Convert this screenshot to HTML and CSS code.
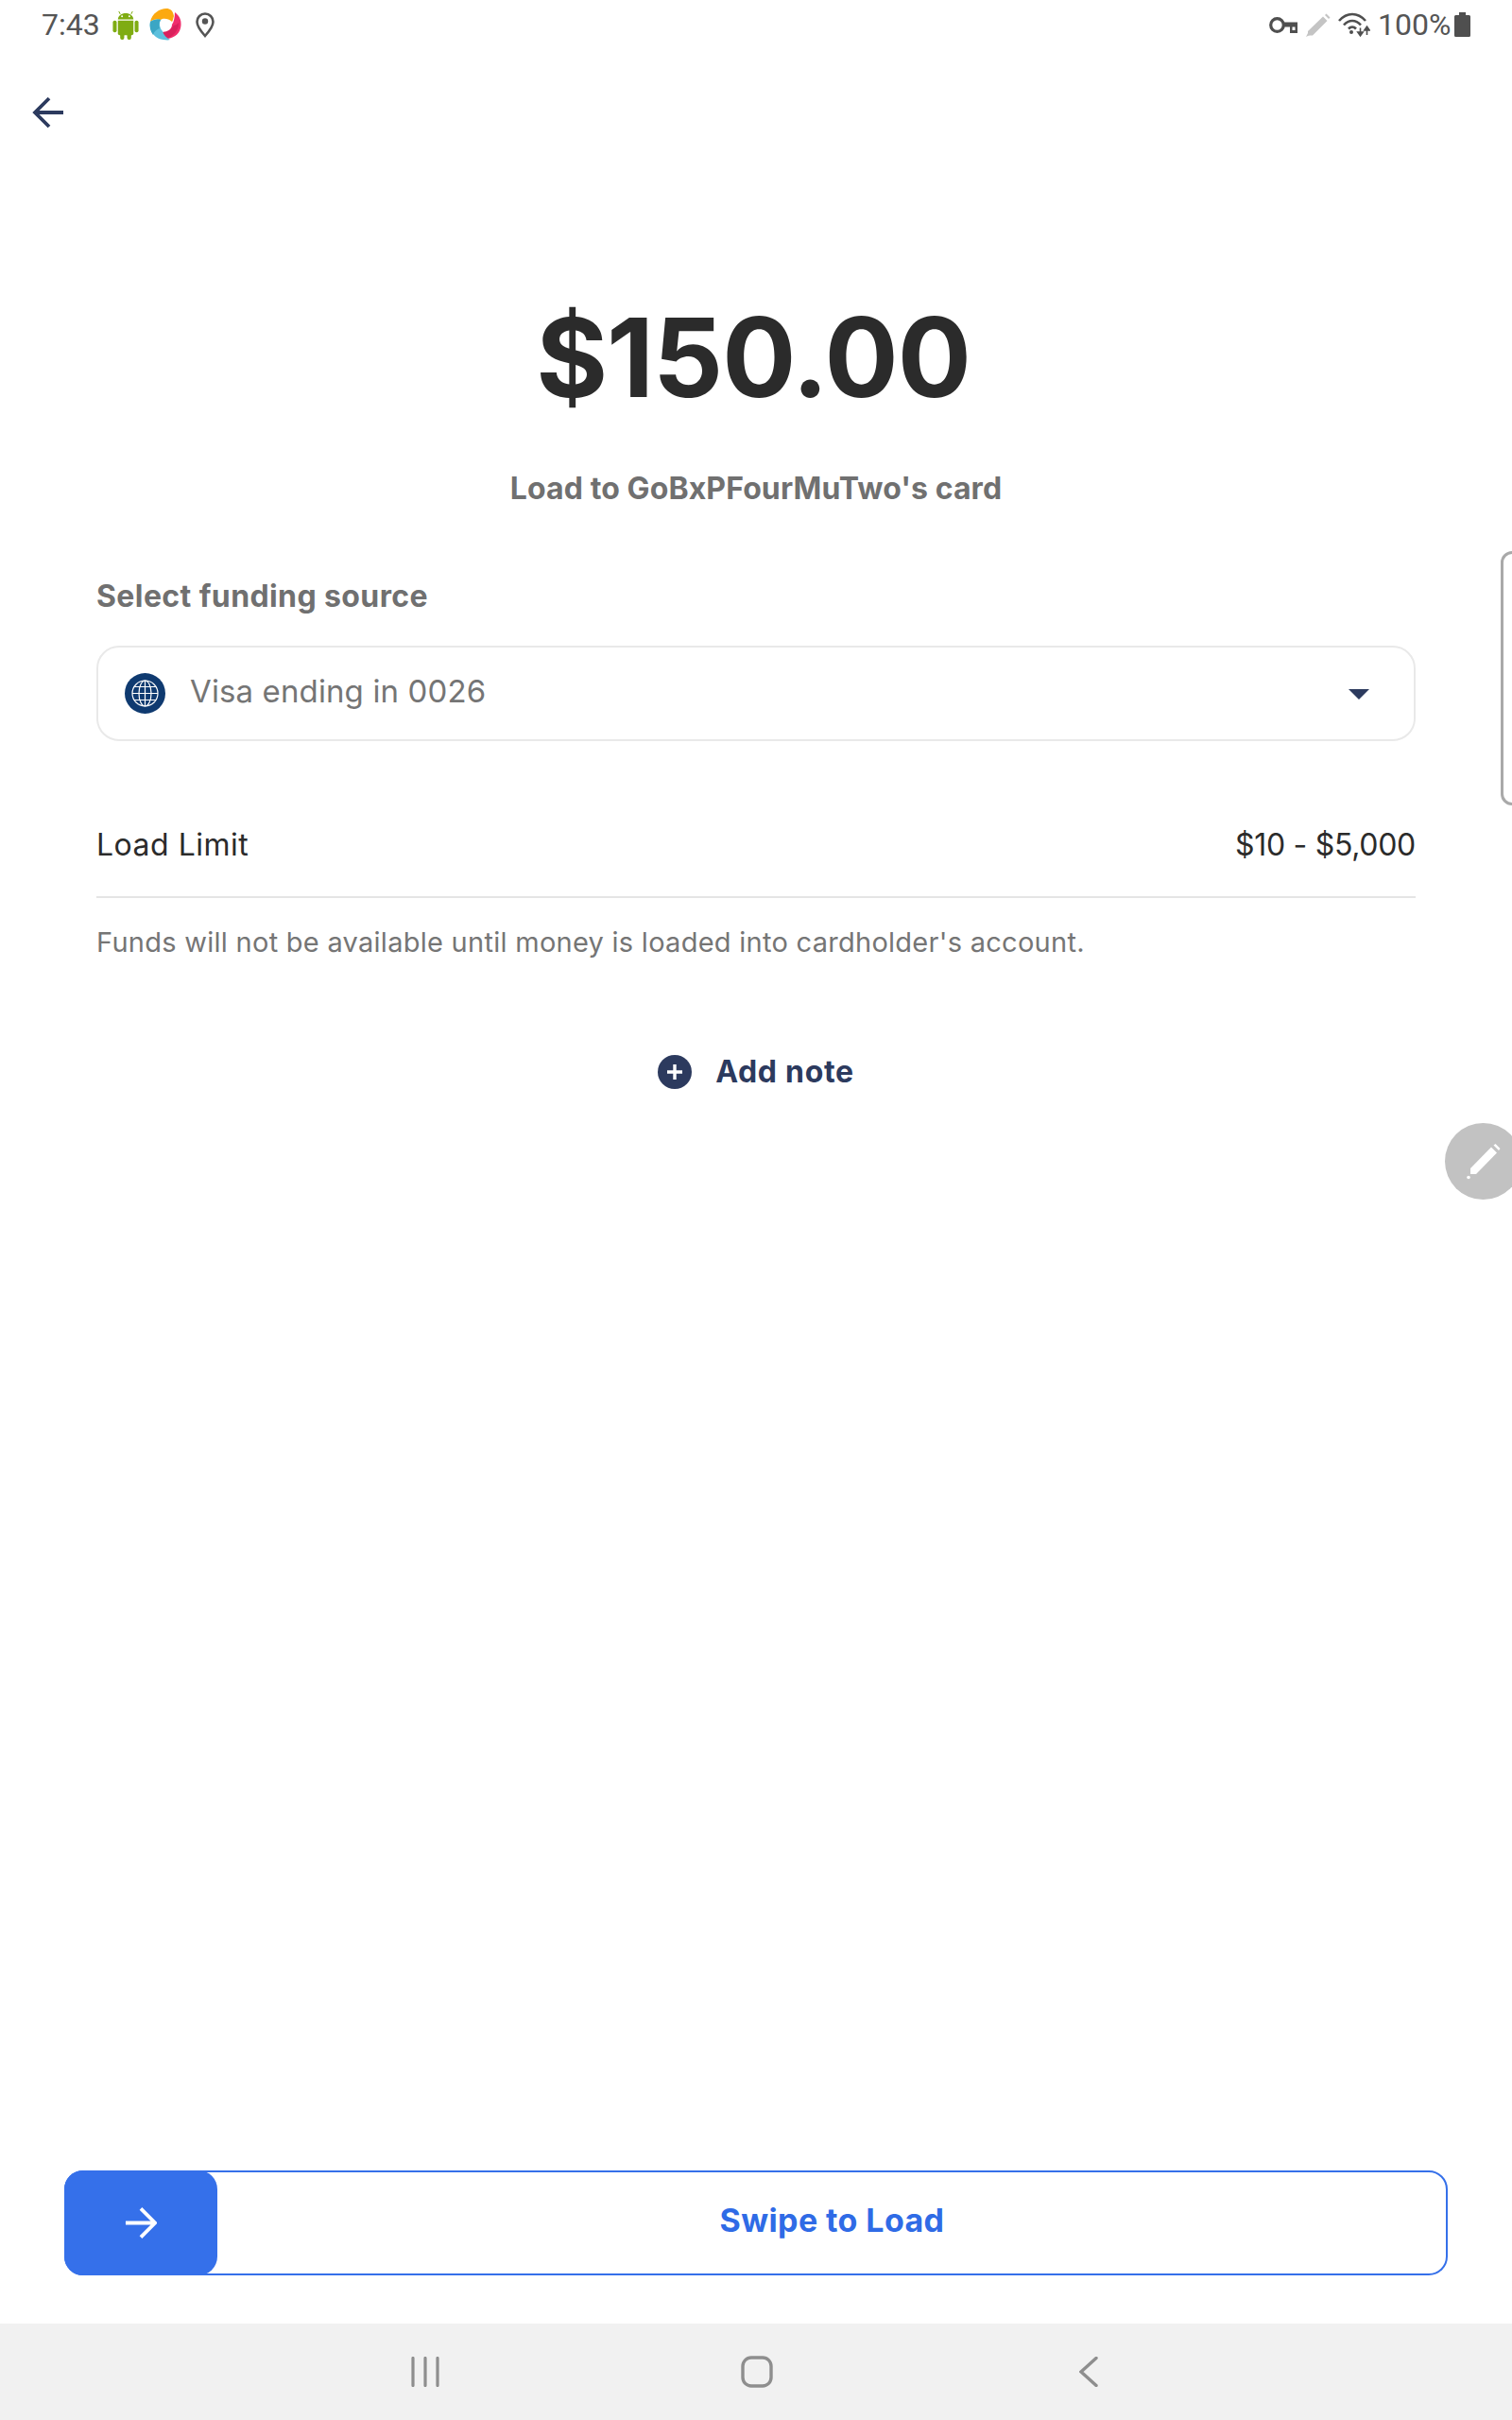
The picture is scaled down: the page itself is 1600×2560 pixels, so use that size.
FILE: index.html
```html
<!DOCTYPE html>
<html lang="en">
<head>
<meta charset="utf-8">
<title>Load card</title>
<link rel="stylesheet" href="styles.css">
</head>
<body>
<div class="screen">
  <header class="status">
    <div class="status-left">
      <span class="time">7:43</span>
      <svg class="ic-android" viewBox="0 0 28 32"><g fill="#7fac12"><rect x="0" y="11" width="4.2" height="13" rx="2"/><rect x="23.8" y="11" width="4.2" height="13" rx="2"/><path d="M5.5 11h17v14a2 2 0 0 1-2 2h-13a2 2 0 0 1-2-2z"/><path d="M5.5 9.800C5.800 5.500 9.500 3 14 3s8.200 2.500 8.500 6.800z"/><rect x="8" y="25" width="4.400" height="7" rx="2"/><rect x="15.600" y="25" width="4.400" height="7" rx="2"/></g><path d="M8 4 6.500 1M20 4l1.500-3" stroke="#7fac12" stroke-width="1" fill="none"/><circle cx="10" cy="6.500" r="1" fill="#fff"/><circle cx="18" cy="6.500" r="1" fill="#fff"/></svg>
      <svg class="ic-logo" viewBox="0 0 34 34"><path d="M1 14C3 5 11 0 18 0c4 0 7 2 8 8-1 3-1 5-2 6-4-4-10-4-12-2-4-1-8-1-11 2z" fill="#fca90f"/><path d="M27 4c5 4 7 8 6.500 14C33 26 27 31 19 32c-3-1-5-5-5-7 5 0 10-3 10-8 2-3 3-8 3-13z" fill="#f02e6c"/><path d="M14 25c5 0 10-3 11.500-7 2 0 4-1 5.500-3 1 5-3 13-12 17-3-1-5-5-5-7z" fill="#d11d57" opacity=".75"/><path d="M1 14c3-2 7-3 11-2-2 4-1 9 2 12 1 4 4 7 8 9-3 1-5 0-7 0C6 32-1 24 1 14z" fill="#5cc0dd"/><path d="M1 14c3-2 7-3 11-2-2 3-2 6-1 9-3 1-6 3-7 7C1 24 0 19 1 14z" fill="#3ba6c4"/></svg>
      <svg class="ic-pin" viewBox="0 0 20 27"><path d="M10 1.500a8.500 8.500 0 0 0-8.500 8.500C1.500 15.500 10 25 10 25s8.500-9.500 8.500-15A8.500 8.500 0 0 0 10 1.500z" fill="none" stroke="#555" stroke-width="2.600"/><circle cx="10" cy="9.500" r="3.200" fill="#555"/></svg>
    </div>
    <div class="status-right">
      <svg class="ic-key" viewBox="0 0 30 17"><circle cx="8.500" cy="8.500" r="6.800" fill="none" stroke="#4f4f4f" stroke-width="3.200"/><path d="M14 5.500h16v11.500h-8v-6.500h-8z" fill="#4f4f4f"/><path d="M24.500 10.500v3.500h3v-3.500z" fill="#fff"/></svg>
      <svg class="ic-edit" viewBox="0 0 26 25"><path d="M2 19 18 3.500l4.500 4.500L7 23.500H2z" fill="#c4c4c4"/><path d="M20 2l1.500-1.500 4 4L24 6z" fill="#c4c4c4"/><path d="M0 25l2-4 2 2z" fill="#c4c4c4"/></svg>
      <svg class="ic-wifi" viewBox="0 0 34 26"><g fill="none" stroke="#4f4f4f" stroke-width="2.600"><path d="M1 9C5 4.500 10 2 15 2s10 2.500 14 7"/><path d="M6 13.500c2.500-2.800 6-4.500 9-4.500s6.500 1.700 9 4.500"/><path d="M11 17.500c1.200-1.300 2.600-2 4-2s2.800.7 4 2"/></g><circle cx="14" cy="21" r="2" fill="#4f4f4f"/><path d="M23.500 16.500v7M20.800 21l2.700 3.800 2.700-3.800z" stroke="#4f4f4f" stroke-width="1.600" fill="#4f4f4f"/><path d="M30.500 24v-7M27.800 19l2.700-3.800 2.700 3.800z" stroke="#4f4f4f" stroke-width="1.600" fill="#4f4f4f"/></svg>
      <span class="battery-pct">100%</span>
      <svg class="ic-battery" viewBox="0 0 17 26"><path d="M5 0h7v3h3.500a1.500 1.500 0 0 1 1.500 1.500V24.500a1.500 1.500 0 0 1-1.500 1.500h-14A1.500 1.500 0 0 1 0 24.500V4.500A1.500 1.500 0 0 1 1.500 3H5z" fill="#4f4f4f"/></svg>
    </div>
  </header>

  <nav class="topbar">
    <svg class="ic-back" viewBox="0 0 34 34"><path d="M33 17H3M18 2 3 17l15 15" fill="none" stroke="#2c3a5e" stroke-width="3.800"/></svg>
  </nav>

  <main class="content">
    <h1 class="amount">$150.00</h1>
    <p class="subtitle">Load to GoBxPFourMuTwo's card</p>

    <h2 class="section-label">Select funding source</h2>
    <div class="select">
      <svg class="ic-globe" viewBox="0 0 43 43"><circle cx="21.500" cy="21.500" r="21.500" fill="#0f3a70"/><g fill="none" stroke="#fff" stroke-width="1.200"><circle cx="21.500" cy="21.500" r="13.500"/><ellipse cx="21.500" cy="21.500" rx="6.500" ry="13.500"/><path d="M21.500 8v27M8 21.500h27M10 14.500h23M10 28.500h23"/></g></svg>
      <span class="select-text">Visa ending in 0026</span>
      <span class="caret"></span>
    </div>

    <div class="limit-row">
      <span class="limit-label">Load Limit</span>
      <span class="limit-value">$10 - $5,000</span>
    </div>
    <p class="hint">Funds will not be available until money is loaded into cardholder's account.</p>

    <div class="add-note">
      <svg class="ic-plus" viewBox="0 0 36 36"><circle cx="18" cy="18" r="18" fill="#2c3a5e"/><path d="M18 10v16M10 18h16" stroke="#fff" stroke-width="3.400"/></svg>
      <span>Add note</span>
    </div>
  </main>

  <div class="side-handle"></div>
  <div class="fab">
    <svg viewBox="0 0 40 40"><path d="M5 29 27 6.500l6 6L11 35H5z" fill="#fff" transform="translate(0 -1)"/><path d="M29.500 3.500l2-1.500 5 5-1.500 2z" fill="#fff"/><circle cx="3" cy="37.500" r="1.800" fill="#fff"/></svg>
  </div>

  <div class="swipe">
    <div class="swipe-knob">
      <svg viewBox="0 0 36 34"><path d="M1 17h33M18 1l16 16-16 16" fill="none" stroke="#fff" stroke-width="4"/></svg>
    </div>
    <span class="swipe-text">Swipe to Load</span>
  </div>

  <footer class="navbar">
    <svg class="nav-recents" viewBox="0 0 30 32"><path d="M2 1.500v29M15 1.500v29M28 1.500v29" stroke="#8e8e8e" stroke-width="3.200" stroke-linecap="round"/></svg>
    <svg class="nav-home" viewBox="0 0 34 34"><rect x="2" y="2" width="30" height="30" rx="9" fill="none" stroke="#8e8e8e" stroke-width="3.400"/></svg>
    <svg class="nav-back" viewBox="0 0 20 32"><path d="M18 1.500 2 16l16 14.500" fill="none" stroke="#8e8e8e" stroke-width="3.400" stroke-linecap="round"/></svg>
  </footer>
</div>
</body>
</html>
```
FILE: styles.css
```css
* { box-sizing: border-box; }
html, body { margin: 0; padding: 0; background: #fff; }
.screen {
  position: relative;
  width: 1600px;
  height: 2560px;
  overflow: hidden;
  display: flex;
  flex-direction: column;
  font-family: Inter, "Liberation Sans", sans-serif;
}
svg { display: block; flex: none; }

.status {
  height: 52px;
  display: flex;
  justify-content: space-between;
  align-items: center;
  padding: 0 44px;
  font-family: Roboto, sans-serif;
  color: #555;
}
.status-left, .status-right { display: flex; align-items: center; }
.time { font-size: 32px; line-height: 52px; width: 75px; }
.ic-android { width: 28px; height: 31px; margin-right: 11px; }
.ic-logo { width: 34px; height: 34px; margin-right: 15px; }
.ic-pin { width: 20px; height: 27px; }
.ic-key { width: 30px; height: 17px; margin-right: 9px; margin-top: 1px; }
.ic-edit { width: 26px; height: 25px; margin-right: 8px; }
.ic-wifi { width: 34px; height: 26px; margin-right: 8px; }
.battery-pct { font-size: 32px; line-height: 52px; width: 81px; }
.ic-battery { width: 17px; height: 26px; }

.topbar { height: 102px; padding: 50px 0 0 34px; }
.ic-back { width: 34px; height: 34px; }

.content { padding: 0 102px; flex: 1; }

.amount {
  margin: 149px 0 0;
  font-size: 116px;
  line-height: 150px;
  font-weight: 700;
  color: #2b2b2b;
  text-align: center;
  padding-right: 6px;
  letter-spacing: -1px;
}
.subtitle {
  margin: 42px 0 0;
  font-size: 32px;
  line-height: 44px;
  font-weight: 650;
  letter-spacing: .1px;
  color: #707070;
  text-align: center;
}
.section-label {
  margin: 70px 0 0;
  font-size: 32px;
  line-height: 44px;
  font-weight: 650;
  letter-spacing: .4px;
  color: #707070;
}
.select {
  margin-top: 30px;
  height: 101px;
  border: 2px solid #e9e9e9;
  border-radius: 24px;
  display: flex;
  align-items: center;
  padding: 0 47px 0 28px;
}
.ic-globe { width: 43px; height: 43px; }
.select-text {
  margin-left: 26px;
  font-size: 33px;
  letter-spacing: .12px;
  color: #757575;
  flex: 1;
  margin-top: -6px;
}
.caret {
  width: 0;
  height: 0;
  border-left: 11px solid transparent;
  border-right: 11px solid transparent;
  border-top: 11px solid #2c3a5e;
  margin-top: 2px;
}
.limit-row {
  height: 166px;
  padding-top: 90px;
  border-bottom: 2px solid #e5e5e5;
  display: flex;
  justify-content: space-between;
  font-size: 32px;
  line-height: 40px;
  color: #2b2b2b;
}
.limit-label { letter-spacing: .5px; }
.limit-value { letter-spacing: -.3px; }
.hint {
  margin: 29px 0 0;
  font-size: 29px;
  line-height: 36px;
  letter-spacing: .27px;
  color: #757575;
}
.add-note {
  margin-top: 99px;
  display: flex;
  justify-content: center;
  align-items: center;
  gap: 25px;
  font-size: 32px;
  line-height: 40px;
  font-weight: 650;
  letter-spacing: .7px;
  color: #2c3a5e;
}
.ic-plus { width: 36px; height: 36px; }

.side-handle {
  position: absolute;
  left: 1588px;
  top: 583px;
  width: 30px;
  height: 269px;
  border: 3px solid #a9a9a9;
  border-radius: 12px;
  background: #fff;
}
.fab {
  position: absolute;
  left: 1529px;
  top: 1188px;
  width: 81px;
  height: 81px;
  border-radius: 50%;
  background: #c2c2c2;
  padding: 20px 0 0 22px;
}
.fab svg { width: 40px; height: 40px; }

.swipe {
  margin: 0 68px 51px 68px;
  height: 111px;
  border: 2px solid #3570ea;
  border-radius: 20px;
  display: flex;
  align-items: center;
  position: relative;
}
.swipe-knob {
  position: absolute;
  left: -2px;
  top: -2px;
  width: 162px;
  height: 111px;
  background: #3570ea;
  border-radius: 20px;
  display: flex;
  align-items: center;
  justify-content: center;
}
.swipe-knob svg { width: 34px; height: 33px; }
.swipe-text {
  flex: 1;
  padding-left: 161px;
  text-align: center;
  font-size: 34px;
  font-weight: 700;
  letter-spacing: .4px;
  color: #2f6be6;
  margin-top: -7px;
}

.navbar {
  height: 102px;
  background: #f1f1f1;
  display: flex;
  align-items: center;
  justify-content: center;
  padding-right: 4px;
}
.nav-recents { width: 30px; height: 32px; margin-right: 319px; }
.nav-home { width: 34px; height: 34px; margin-right: 324px; }
.nav-back { width: 20px; height: 32px; }
```
